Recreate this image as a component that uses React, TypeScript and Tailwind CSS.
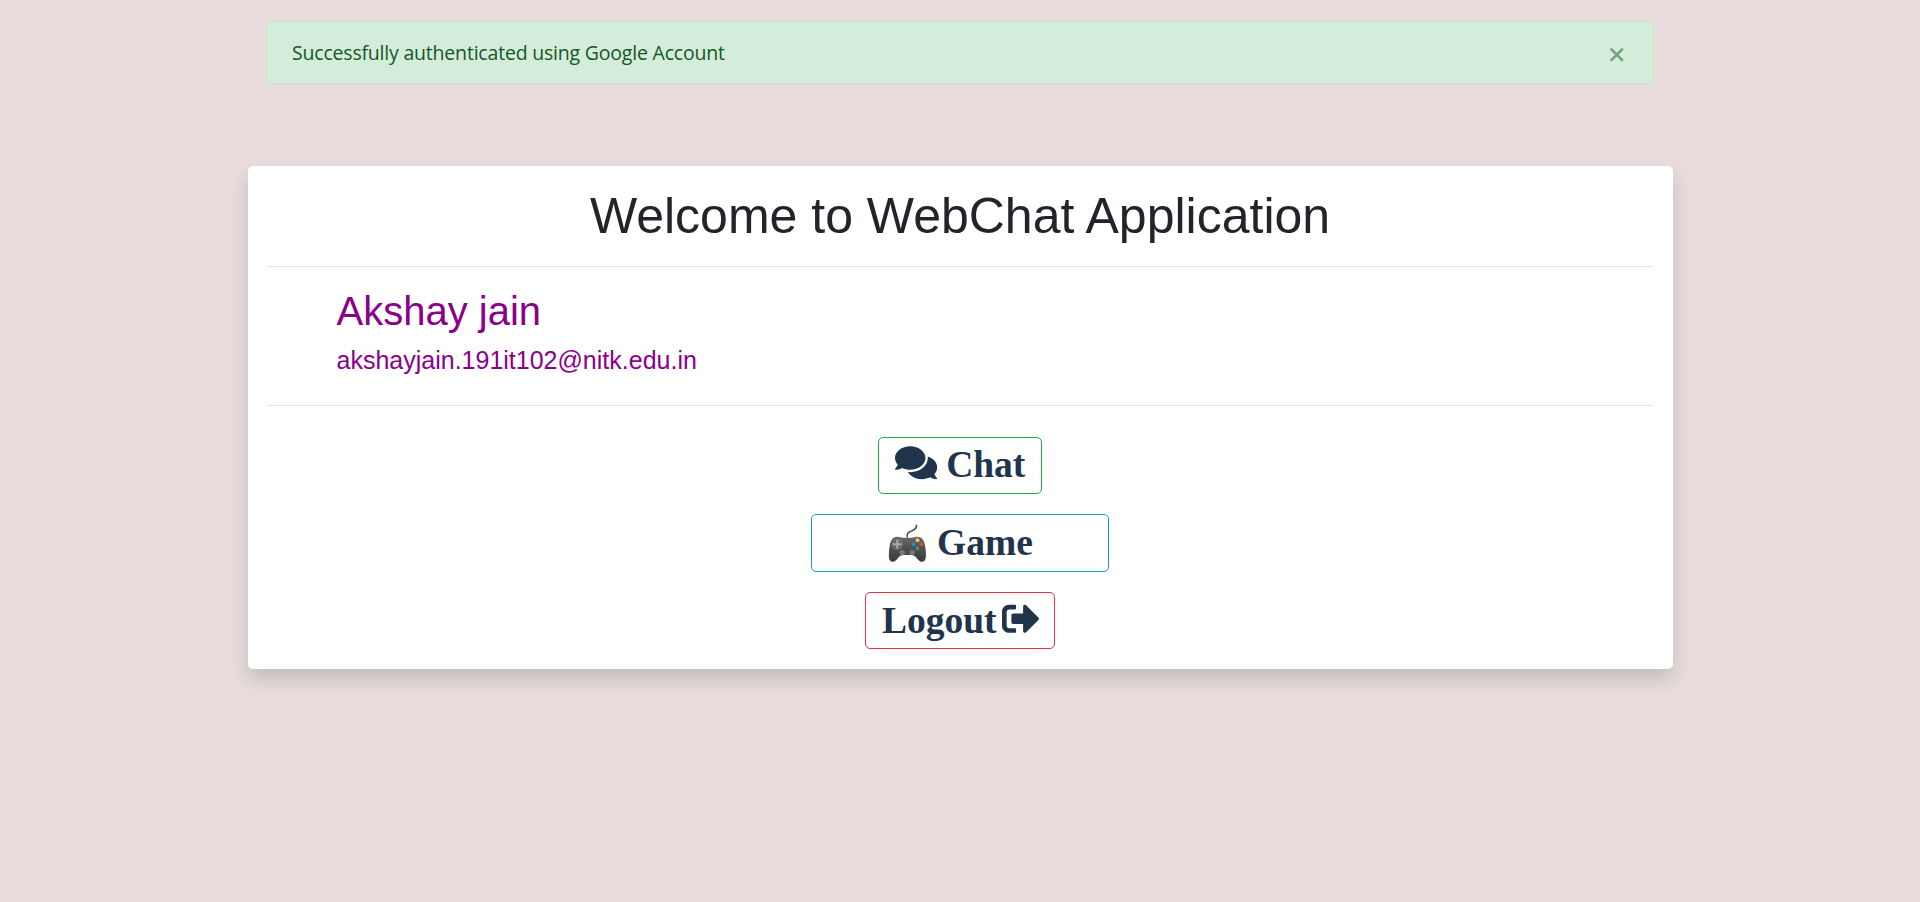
import { FaComments, FaSignOutAlt } from "react-icons/fa";

function Gamepad() {
  return (
    <svg className="-mt-px" width="40" height="42" viewBox="0 0 40 42" aria-hidden="true">
      <defs>
        <linearGradient id="pad" x1="0" y1="0" x2="0" y2="1">
          <stop offset="0" stopColor="#6b6b6b" />
          <stop offset="0.4" stopColor="#525252" />
          <stop offset="1" stopColor="#3b3b3b" />
        </linearGradient>
      </defs>
      <path
        d="M19.300 15.500c-.6-4 .6-5.200 4-6.400 3.400-1.200 5.600-2.600 5.300-6.300"
        fill="none"
        stroke="#484848"
        strokeWidth="1.500"
      />
      <path
        d="M9 14.700c2.500-.2 4 .8 6 1h8.500c2-.2 3.500-1.200 6-1 4.500.3 6.300 3 7.200 7.300 1 4.400 1.400 8.700 1.200 12.500-.2 3.500-1.700 5.300-4 5.300-2.500 0-3.500-1.800-5.200-3.700-1.600-1.800-3-3-5.600-3h-7.500c-2.600 0-4 1.200-5.600 3C8.200 38 7.200 39.800 4.700 39.800 2.400 39.800 1 38 .9 34.500.7 30.700 1.200 26.500 2 22.100c1-4.400 3-7.100 7-7.400Z"
        fill="url(#pad)"
      />
      <circle cx="9.300" cy="22.200" r="5.300" fill="#858585" />
      <circle cx="9.300" cy="22.200" r="4.500" fill="#626262" />
      <path d="M9.300 18v8.400M5.100 22.200h8.400" stroke="#aaaaaa" strokeWidth="2.100" />
      <circle cx="14.300" cy="30.600" r="2.700" fill="#777777" />
      <circle cx="24.200" cy="30.600" r="2.700" fill="#777777" />
      <circle cx="29.500" cy="18.200" r="1.900" fill="#fcc934" />
      <circle cx="25.600" cy="22.200" r="1.900" fill="#1e88f0" />
      <circle cx="33.400" cy="22.200" r="1.900" fill="#ea4035" />
      <circle cx="29.500" cy="26.100" r="1.900" fill="#35a853" />
    </svg>
  );
}

const button =
  "flex items-center rounded-[5px] border font-['Liberation_Serif',serif] text-[37.5px] font-bold leading-none text-[#20354b]";

export default function App() {
  return (
    <div className="flex h-[902px] w-full flex-col items-center border-t border-[#dadce0] bg-[#e8dcdc] pt-5 font-['Liberation_Sans',sans-serif]">
      <div className="flex h-[63px] w-[1388px] items-center justify-between rounded-[5px] border border-[#c3e6cb] bg-[#d4edda] pl-[25px] pr-[29px] text-[#155724]">
        <span className="pt-px font-['Open_Sans',sans-serif] text-[19.5px] leading-[30px] tracking-[-0.2px]">
          Successfully authenticated using Google Account
        </span>
        <button className="flex pt-1" aria-label="Close">
          <svg width="15" height="15" viewBox="0 0 15 15" fill="none" strokeLinecap="round">
            <path d="m2.500 3.500 10.500 10.500M13 3.500 2.500 14" stroke="#ffffff" strokeOpacity=".5" strokeWidth="2.800" />
            <path d="m2.500 2.500 10.500 10.500M13 2.500 2.500 13" stroke="#76a581" strokeWidth="2.800" />
          </svg>
        </button>
      </div>

      <main className="mt-[82px] flex h-[503px] w-[1425px] flex-col rounded-[5px] bg-white px-5 pt-5 shadow-[0_10px_20px_rgba(0,0,0,0.15)]">
        <h1 className="text-center text-[50px] leading-[60px] text-[#212529]">
          Welcome to WebChat Application
        </h1>
        <hr className="mt-5 border-t border-black/10" />
        <section className="mt-5 h-[118px] pl-[69px] text-[#8b008b]">
          <h2 className="text-[40px] leading-[48px]">Akshay jain</h2>
          <p className="mt-[10px] text-[25px] leading-[30px]">akshayjain.191it102@nitk.edu.in</p>
        </section>
        <hr className="border-t border-black/10" />
        <nav className="mt-[31px] flex flex-col items-center gap-5">
          <button className={`${button} h-[57px] w-[164px] border-[#28a745] pb-0.5 pl-4`}>
            <FaComments className="-mt-1 h-[37.5px] w-[42.2px] shrink-0" />
            <span className="ml-[9px]">Chat</span>
          </button>
          <button className={`${button} h-[58px] w-[298px] border-[#17a2b8] pl-[76px]`}>
            <Gamepad />
            <span className="ml-[9px]">Game</span>
          </button>
          <button className={`${button} h-[57px] w-[190px] border-[#dc3545] pl-4`}>
            <span>Logout</span>
            <FaSignOutAlt className="-mt-1 ml-[5px] h-[37.5px] w-[37.5px] shrink-0" />
          </button>
        </nav>
      </main>
    </div>
  );
}
